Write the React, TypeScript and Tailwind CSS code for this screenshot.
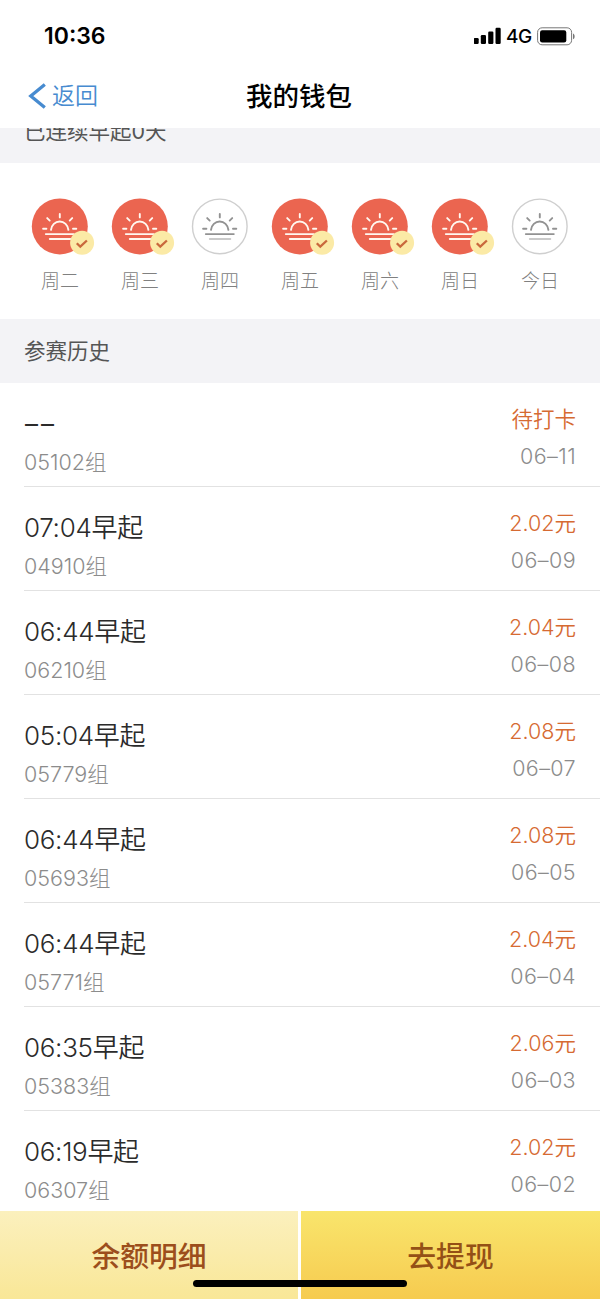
interface Day {
  label: string;
  checked: boolean;
}

interface HistoryRecord {
  title: string;
  group: string;
  amount: string;
  date: string;
}

const days: Day[] = [
  { label: "周二", checked: true },
  { label: "周三", checked: true },
  { label: "周四", checked: false },
  { label: "周五", checked: true },
  { label: "周六", checked: true },
  { label: "周日", checked: true },
  { label: "今日", checked: false },
];

// an empty title means the check-in has not happened yet
const records: HistoryRecord[] = [
  { title: "", group: "05102组", amount: "待打卡", date: "06–11" },
  { title: "07:04早起", group: "04910组", amount: "2.02元", date: "06–09" },
  { title: "06:44早起", group: "06210组", amount: "2.04元", date: "06–08" },
  { title: "05:04早起", group: "05779组", amount: "2.08元", date: "06–07" },
  { title: "06:44早起", group: "05693组", amount: "2.08元", date: "06–05" },
  { title: "06:44早起", group: "05771组", amount: "2.04元", date: "06–04" },
  { title: "06:35早起", group: "05383组", amount: "2.06元", date: "06–03" },
  { title: "06:19早起", group: "06307组", amount: "2.02元", date: "06–02" },
];

function StatusBar() {
  return (
    <div className="flex h-16 items-center justify-between pr-6 pl-11 pt-2">
      <span className="text-[23px] leading-8 font-[580]">10:36</span>
      <div className="flex items-center">
        <svg width="28" height="18" viewBox="0 0 28 18">
          <rect x="-0.5" y="11" width="5.2" height="6" rx="1.2" />
          <rect x="6.8" y="8" width="5.2" height="9" rx="1.2" />
          <rect x="14.200" y="4.500" width="5.2" height="12.500" rx="1.2" />
          <rect x="21.500" y="0.7" width="5.2" height="16.300" rx="1.2" />
        </svg>
        <span className="ml-1 w-[27px] pt-0.5 text-[19px] leading-8 font-[450] tracking-[-0.4px]">4G</span>
        <svg className="ml-1" width="39" height="19" viewBox="0 0 39 19">
          <rect x="0.6" y="0.8" width="34" height="17" rx="4.5" fill="none" stroke="#777" strokeWidth="1" />
          <rect x="3" y="3.2" width="26.3" height="12.2" rx="2.2" />
          <path d="M36 6.5c2.2.8 2.2 5 0 5.8z" fill="#777" />
        </svg>
      </div>
    </div>
  );
}

function NavBar() {
  return (
    <div className="grid h-16 grid-cols-3 items-center">
      <button className="flex items-center pl-7 text-[23px] leading-8 font-[350] text-[#478bd0]">
        <svg className="mr-[5px]" width="19" height="26" viewBox="0 0 19 26" fill="none" stroke="currentColor" strokeWidth="3.3">
          <path d="M16.8 1.5 2.8 13l14 11.5" />
        </svg>
        返回
      </button>
      <h1 className="text-center text-[26.5px] leading-8 font-medium">
        <span className="-ml-0.5">我的钱包</span>
      </h1>
    </div>
  );
}

function DayItem({ label, checked }: Day) {
  const line = checked ? "#fff8f0" : "#929292";
  return (
    <div className="flex w-20 flex-col items-center">
      <svg className="overflow-visible" width="56" height="56" viewBox="0.2 -0.4 56 56" fill="none" strokeLinecap="round">
        {checked ? (
          <circle cx="28" cy="28" r="28" fill="#eb6550" />
        ) : (
          <circle cx="28" cy="28" r="27.3" stroke="#cfcfcf" strokeWidth="1.4" />
        )}
        <g stroke={line} strokeWidth="1.9">
          <path d="M19.2 31.5c.5-5 4.2-8.4 8.7-8.4s8.2 3.4 8.7 8.4" />
          <path d="M28 15.6v3.4M15.4 19.7l2.5 2.5M40.4 19.7l-2.5 2.5M11.3 30.3h3.3M41.2 30.3h3.3M14 35.7h28" />
          <path d="M18 40.6h20.5" stroke={checked ? line : "#cacaca"} />
        </g>
        {checked && (
          <>
            <circle cx="50.3" cy="44.3" r="12" fill="#fbeaa6" />
            <path d="m45 44.8 3.5 3.5 6.6-6.2" stroke="#c9683c" strokeWidth="2.3" strokeLinecap="butt" />
          </>
        )}
      </svg>
      <span className="mt-3 text-[19px] leading-8 font-light text-[#808080]">{label}</span>
    </div>
  );
}

function SectionHeader({ children }: { children: string }) {
  return (
    <h2 className="h-16 bg-[#f3f3f6] pl-6 text-[21.5px] leading-[64px] text-[#555]">{children}</h2>
  );
}

function HistoryRow({ title, group, amount, date }: HistoryRecord) {
  return (
    <li className="flex h-[104px] justify-between border-b border-[#e2e2e2] pr-6">
      <div className="pt-[23px]">
        {title ? (
          <p className="text-[26px] leading-9 font-[350] tracking-[-0.3px] text-[#2b2b2b]">{title}</p>
        ) : (
          <p className="flex gap-0.5 pl-px text-[26px] leading-9 font-normal text-[#2b2b2b]">
            <span className="w-[14px]">–</span>
            <span className="w-[14px]">–</span>
          </p>
        )}
        <p className="mt-1 text-[21.5px] leading-8 font-light text-[#8c8c8c]">{group}</p>
      </div>
      <div className="pt-[20px] text-right">
        <p className="text-[21.5px] leading-8 font-[350] text-[#d66a32]">{amount}</p>
        <p className="mt-[5px] text-[21.5px] leading-8 font-light tracking-[0.4px] text-[#8c8c8c]">{date}</p>
      </div>
    </li>
  );
}

export default function App() {
  return (
    <div className="relative flex h-[1299px] w-[600px] flex-col overflow-hidden bg-white font-['Inter','Noto_Sans_CJK_SC',sans-serif] text-black">
      <header className="shrink-0">
        <StatusBar />
        <NavBar />
      </header>

      <main className="min-h-0 flex-1 overflow-hidden">
        {/* list is scrolled a little, so the first heading is cut by the nav bar */}
        <div className="-mt-[29px]">
          <SectionHeader>已连续早起0天</SectionHeader>
          <div className="flex h-[156px] px-5 pt-[35px]">
            {days.map((day) => (
              <DayItem key={day.label} {...day} />
            ))}
          </div>
          <SectionHeader>参赛历史</SectionHeader>
          <ul className="pl-6">
            {records.map((record) => (
              <HistoryRow key={record.date} {...record} />
            ))}
          </ul>
        </div>
      </main>

      <footer className="flex h-[88px] shrink-0 gap-[3px] text-[28.8px] font-medium">
        <button className="w-[298px] bg-linear-to-b from-[#fbf0bd] to-[#f9e797] pt-1 text-[#9c4e1c]">余额明细</button>
        <button className="flex-1 bg-linear-to-b from-[#f9e56c] to-[#f6cb4f] pt-1 text-[#945016]">去提现</button>
      </footer>
      <div className="absolute bottom-3 left-[193px] h-[7px] w-[214px] rounded-full bg-black" />
    </div>
  );
}
